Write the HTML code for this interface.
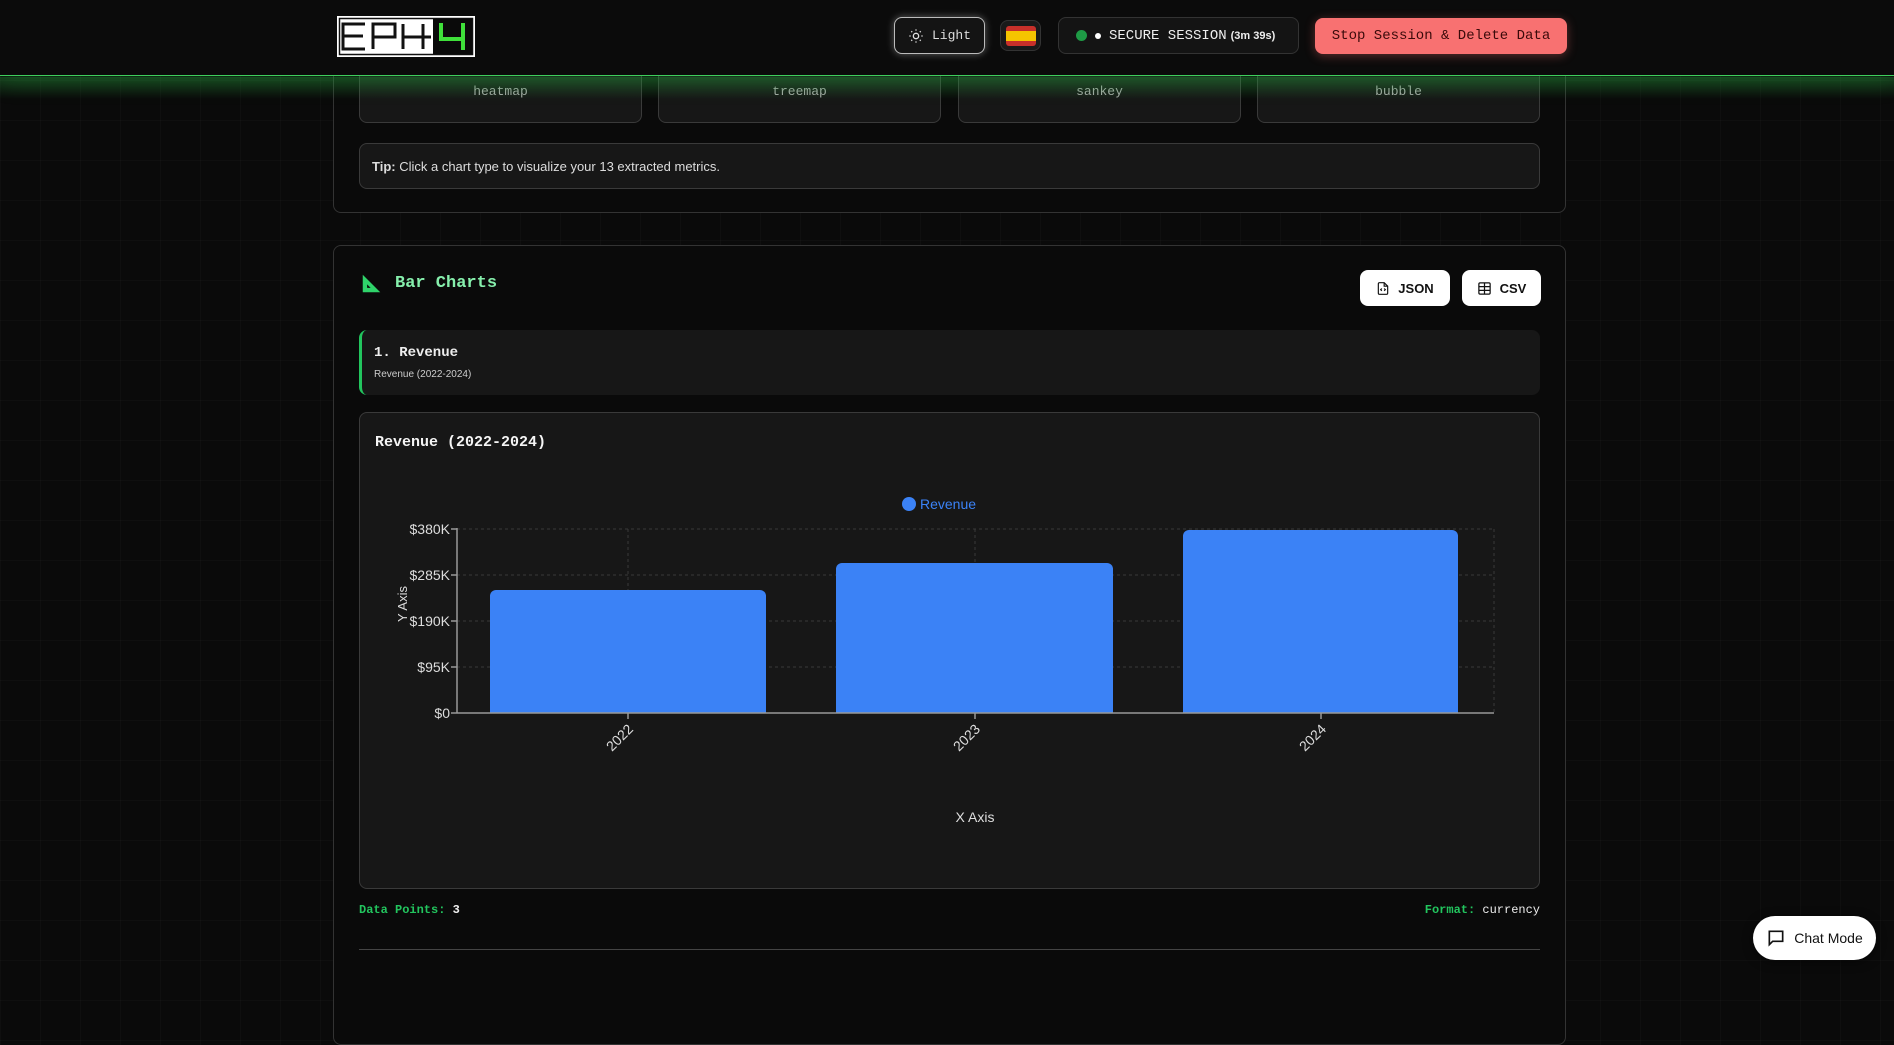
<!DOCTYPE html>
<html><head><meta charset="utf-8"><style>
*{box-sizing:border-box;margin:0;padding:0}
body{width:1894px;height:980px;overflow:hidden;background:#0a0a0a;position:relative;font-family:"Liberation Sans",sans-serif;color:#eee;
background-image:linear-gradient(rgba(255,255,255,0.018) 1px,transparent 1px),linear-gradient(90deg,rgba(255,255,255,0.018) 1px,transparent 1px);background-size:40px 40px}
.a{position:absolute}
.mono{font-family:"Liberation Mono",monospace}
.box{position:absolute;background:#171717;border:1px solid #3a3a3a;border-radius:8px}
.ct{position:absolute;top:0;height:100%;width:100%;text-align:center;font-family:"Liberation Mono",monospace;font-size:13px;color:#aaa;padding-top:13px}
.btn{position:absolute;border-radius:8px;display:flex;align-items:center;justify-content:center}
</style></head><body>
<div class="a" style="left:333px;top:40px;width:1233px;height:173px;border:1px solid #333;border-radius:8px;background:#0a0a0a"></div>
<div class="box" style="left:359px;top:50px;width:283px;height:73px"><div class="ct" style="padding-top:33px">heatmap</div></div>
<div class="box" style="left:658px;top:50px;width:283px;height:73px"><div class="ct" style="padding-top:33px">treemap</div></div>
<div class="box" style="left:958px;top:50px;width:283px;height:73px"><div class="ct" style="padding-top:33px">sankey</div></div>
<div class="box" style="left:1257px;top:50px;width:283px;height:73px"><div class="ct" style="padding-top:33px">bubble</div></div>
<div class="box" style="left:359px;top:143px;width:1181px;height:46px;font-size:13px;color:#ddd;padding:15px 12px"><b>Tip:</b> Click a chart type to visualize your 13 extracted metrics.</div>

<div class="a" style="left:0;top:0;width:1894px;height:76px;background:#0b0b0b;border-bottom:1px solid #3ecf5c;box-shadow:0 4px 22px rgba(40,180,70,0.3)"></div>
<div class="a" style="left:0;top:77px;width:1894px;height:22px;background:linear-gradient(rgba(40,160,60,0.3),rgba(40,160,60,0));"></div>
<svg class="a" style="left:337px;top:16px" width="138" height="41" viewBox="0 0 138 41">
<rect x="0" y="0" width="138" height="41" fill="#fff"/>
<rect x="2.5" y="2.5" width="133" height="36" fill="none" stroke="#111" stroke-width="1.5"/>
<rect x="96" y="3" width="39" height="35" fill="#0a0a0a"/>
<g stroke="#111" stroke-width="3" fill="none">
<path d="M28 8H6V33H28M6 20H26"/>
<path d="M36 33V8H58V21H36"/>
<path d="M66 8V33M66 21H94M86 8V33"/>
</g>
<path d="M104 7V23H128M126 7V34" stroke="#3fe03a" stroke-width="4" fill="none"/>
</svg>
<div class="btn mono" style="left:894px;top:17px;width:91px;height:37px;border:1px solid #bbb;background:#141414;box-shadow:0 0 8px rgba(255,255,255,0.35);font-size:13px;color:#ddd;gap:8px">
<svg width="16" height="16" viewBox="0 0 24 24" fill="none" stroke="#ddd" stroke-width="2"><circle cx="12" cy="12" r="4"/><path d="M12 2v2M12 20v2M4.9 4.9l1.4 1.4M17.7 17.7l1.4 1.4M2 12h2M20 12h2M4.9 19.1l1.4-1.4M17.7 6.3l1.4-1.4"/></svg>Light</div>
<div class="btn" style="left:1000px;top:20px;width:41px;height:31px;border:1px solid #333;background:#1a1a1a">
<div style="width:30px;height:20px;border-radius:3px;background:linear-gradient(#c8302a 25%,#f5c400 25%,#f5c400 75%,#c8302a 75%)"></div></div>
<div class="btn mono" style="left:1058px;top:17px;width:241px;height:37px;border:1px solid #333;background:#141414;font-size:14px;color:#eee;gap:8px;justify-content:flex-start;padding-left:17px">
<span style="width:11px;height:11px;border-radius:50%;background:#1e9a45"></span><span style="width:6px;height:6px;border-radius:50%;background:#fff"></span>SECURE SESSION <span style="font-family:'Liberation Sans';font-size:11px;font-weight:bold;margin-left:-4px">(3m 39s)</span></div>
<div class="btn mono" style="left:1315px;top:18px;width:252px;height:36px;background:#f87171;color:#3a0a0a;font-size:14px;box-shadow:0 2px 10px rgba(248,113,113,0.35)">Stop Session &amp; Delete Data</div>

<div class="a" style="left:333px;top:245px;width:1233px;height:800px;border:1px solid #333;border-radius:8px;background:#0a0a0a"></div>
<svg class="a" style="left:361px;top:273px" width="21" height="21" viewBox="0 0 24 24"><path d="M2 2L22 22H2Z" fill="#2fd36a"/><path d="M7 13L11 17H7Z" fill="#0a0a0a"/></svg>
<div class="a mono" style="left:395px;top:274px;font-size:17px;color:#86efac;font-weight:bold">Bar Charts</div>
<div class="btn" style="left:1360px;top:270px;width:90px;height:36px;background:#fff;color:#111;font-size:13px;font-weight:bold;gap:8px">
<svg width="14" height="15" viewBox="0 0 24 24" fill="none" stroke="#111" stroke-width="2"><path d="M14 2H6a2 2 0 0 0-2 2v16a2 2 0 0 0 2 2h12a2 2 0 0 0 2-2V8z"/><path d="M14 2v6h6M10 12l-2 2 2 2M14 12l2 2-2 2"/></svg>JSON</div>
<div class="btn" style="left:1462px;top:270px;width:79px;height:36px;background:#fff;color:#111;font-size:13px;font-weight:bold;gap:8px">
<svg width="15" height="15" viewBox="0 0 24 24" fill="none" stroke="#111" stroke-width="2"><rect x="3" y="3" width="18" height="18" rx="2"/><path d="M3 9h18M3 15h18M12 3v18"/></svg>CSV</div>
<div class="a" style="left:359px;top:330px;width:1181px;height:65px;background:#171717;border-radius:8px;border-left:3px solid #22c55e"></div>
<div class="a mono" style="left:374px;top:345px;font-size:14px;font-weight:bold;color:#eee">1. Revenue</div>
<div class="a" style="left:374px;top:369px;font-size:10px;color:#ccc">Revenue (2022-2024)</div>
<div class="box" style="left:359px;top:412px;width:1181px;height:477px"></div>
<div class="a mono" style="left:375px;top:434px;font-size:15px;font-weight:bold;color:#f5f5f5">Revenue (2022-2024)</div>
<div class="a" style="left:902px;top:496px;font-size:14px;color:#3b82f6;display:flex;align-items:center;gap:4px"><span style="width:14px;height:14px;border-radius:50%;background:#3b82f6"></span>Revenue</div>
<svg class="a" style="left:0;top:0" width="1894" height="980">
<g stroke="#3a3a3a" stroke-dasharray="3 3"><path d="M457 529H1494M457 575H1494M457 621H1494M457 667H1494M628 529V713M975 529V713M1321 529V713M1494 529V713"/></g>
<rect x="490" y="590" width="276" height="130" rx="6" fill="#3b82f6"/>
<rect x="836" y="563" width="277" height="157" rx="6" fill="#3b82f6"/>
<rect x="1183" y="530" width="275" height="190" rx="6" fill="#3b82f6"/>
<rect x="440" y="713" width="1060" height="10" fill="#171717"/>
<g stroke="#999" stroke-width="1.5" fill="none"><path d="M457 528V713H1494M451 529H457M451 575H457M451 621H457M451 667H457M451 713H457M628 713V719M975 713V719M1321 713V719"/></g>
<g fill="#ddd" font-size="14" font-family="Liberation Sans" text-anchor="end">
<text x="450" y="534">$380K</text><text x="450" y="580">$285K</text><text x="450" y="626">$190K</text><text x="450" y="672">$95K</text><text x="450" y="718">$0</text>
<text transform="translate(634 730) rotate(-45)">2022</text>
<text transform="translate(981 730) rotate(-45)">2023</text>
<text transform="translate(1327 730) rotate(-45)">2024</text>
<text transform="translate(407 604) rotate(-90)" text-anchor="middle" font-size="13">Y Axis</text>
<text x="975" y="822" text-anchor="middle" font-size="14">X Axis</text>
</g>
</svg>
<div class="a mono" style="left:359px;top:903px;font-size:12px;font-weight:bold;color:#22c55e">Data Points: <span style="color:#eee">3</span></div>
<div class="a mono" style="left:1300px;top:903px;width:240px;text-align:right;font-size:12px;font-weight:bold;color:#22c55e">Format: <span style="color:#eee;font-weight:normal">currency</span></div>
<div class="a" style="left:359px;top:949px;width:1181px;height:1px;background:#444"></div>
<div class="btn" style="left:1753px;top:916px;width:123px;height:44px;border-radius:22px;background:#fff;color:#111;font-size:14px;gap:8px;box-shadow:0 2px 10px rgba(0,0,0,0.5)">
<svg width="20" height="20" viewBox="0 0 24 24" fill="none" stroke="#111" stroke-width="2"><path d="M4 4h16v12H8l-4 4z"/></svg>Chat Mode</div>
</body></html>
